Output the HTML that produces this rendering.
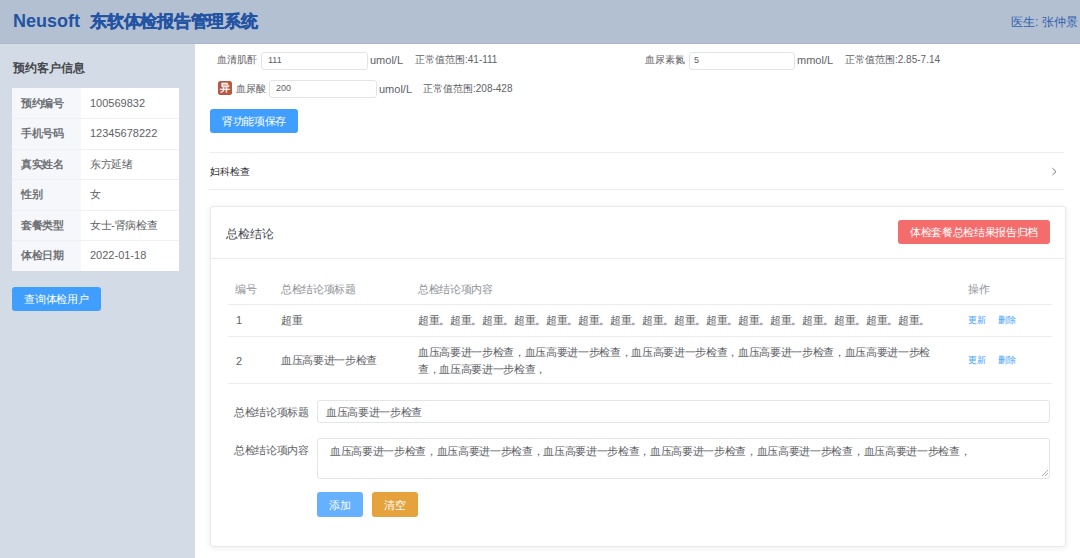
<!DOCTYPE html>
<html><head><meta charset="utf-8">
<style>
*{box-sizing:border-box;margin:0;padding:0}
html,body{width:1080px;height:558px;overflow:hidden;background:#fff;font-family:"Liberation Sans",sans-serif;color:#606266}
.a{position:absolute;white-space:nowrap;line-height:1}
#hdr{position:absolute;left:0;top:0;width:1080px;height:44px;background:#b3c0d1}
#side{position:absolute;left:0;top:44px;width:195px;height:514px;background:#d3dce6}
.inp{position:absolute;border:1px solid #e2e4e8;border-radius:3px;background:#fff}
.btn{position:absolute;border-radius:3px;color:#fff;text-align:center}
.line{position:absolute;height:1px;background:#ededed}
.th{color:#909399}
.t105{font-size:10.5px;letter-spacing:-0.33px}
.t10{font-size:10px}
.t9{font-size:9px}
.lbl{font-size:10.5px;letter-spacing:-0.33px;color:#6e7075;font-weight:600}
.val{font-size:10.5px;letter-spacing:-0.33px;color:#606266}
.row{position:absolute;left:12px;width:167px;height:1px;background:#eef0f3}
.num{font-size:11px;letter-spacing:0}
.lnk{font-size:9px;color:#409eff}
</style></head><body>
<div id="hdr"></div><div style="position:absolute;left:0;top:43px;width:1080px;height:1px;background:#adb9c9"></div>
<div class="a" style="left:13px;top:12px;font-size:18px;font-weight:bold;color:#2353a3">Neusoft</div>
<div class="a" style="left:90px;top:14px;font-size:16.8px;letter-spacing:-0.25px;font-weight:bold;color:#2353a3;-webkit-text-stroke:0.35px #2353a3">东软体检报告管理系统</div>
<div class="a" style="left:1011px;top:16px;font-size:12px;color:#3160ae">医生: 张仲景</div>

<div id="side"></div>
<div class="a" style="left:13px;top:62px;font-size:12px;font-weight:600;color:#45474c">预约客户信息</div>
<div style="position:absolute;left:12px;top:88px;width:167px;height:183px;background:#fff"></div>
<div style="position:absolute;left:12px;top:88px;width:69px;height:183px;background:#f5f7fa"></div>
<div class="row" style="top:118px"></div>
<div class="row" style="top:149px"></div>
<div class="row" style="top:179px"></div>
<div class="row" style="top:210px"></div>
<div class="row" style="top:240px"></div>
<div class="a lbl" style="left:21px;top:98px">预约编号</div><div class="a val num" style="left:90px;top:98px">100569832</div>
<div class="a lbl" style="left:21px;top:128px">手机号码</div><div class="a val num" style="left:90px;top:128px">12345678222</div>
<div class="a lbl" style="left:21px;top:159px">真实姓名</div><div class="a val" style="left:90px;top:159px">东方延绪</div>
<div class="a lbl" style="left:21px;top:189px">性别</div><div class="a val" style="left:90px;top:189px">女</div>
<div class="a lbl" style="left:21px;top:220px">套餐类型</div><div class="a val" style="left:90px;top:220px">女士-肾病检查</div>
<div class="a lbl" style="left:21px;top:250px">体检日期</div><div class="a val num" style="left:90px;top:250px">2022-01-18</div>
<div class="btn" style="left:12px;top:287px;width:89px;height:24px;background:#409eff"><span class="a t105" style="left:0;right:0;top:7px">查询体检用户</span></div>

<!-- main -->
<div class="a t10" style="left:217px;top:55px">血清肌酐</div>
<div class="inp" style="left:261px;top:52px;width:107px;height:18px"></div>
<div class="a t9" style="left:268px;top:56px;color:#606266">111</div>
<div class="a" style="left:370px;top:55px;font-size:11px">umol/L</div>
<div class="a t10" style="left:415px;top:55px">正常值范围:41-111</div>

<div class="a t10" style="left:645px;top:55px">血尿素氮</div>
<div class="inp" style="left:689px;top:52px;width:106px;height:18px"></div>
<div class="a t9" style="left:694px;top:56px;color:#606266">5</div>
<div class="a" style="left:797px;top:55px;font-size:11px">mmol/L</div>
<div class="a t10" style="left:845px;top:55px">正常值范围:2.85-7.14</div>

<div style="position:absolute;left:218px;top:80.5px;width:14px;height:14px;background:#b9563f;border-radius:2.5px"></div>
<div class="a t10" style="left:220px;top:82.5px;color:#fff;font-weight:600">异</div>
<div class="a t10" style="left:236px;top:84px">血尿酸</div>
<div class="inp" style="left:269px;top:80px;width:108px;height:18px"></div>
<div class="a t9" style="left:276px;top:84px;color:#606266">200</div>
<div class="a" style="left:379px;top:84px;font-size:11px">umol/L</div>
<div class="a t10" style="left:423px;top:84px">正常值范围:208-428</div>

<div class="btn" style="left:210px;top:109px;width:88px;height:24px;background:#409eff"><span class="a t105" style="left:0;right:0;top:7px">肾功能项保存</span></div>

<div class="line" style="left:209px;top:152px;width:855px"></div>
<div class="a t10" style="left:210px;top:167px;color:#303133">妇科检查</div>
<svg style="position:absolute;left:1051px;top:167px" width="7" height="10"><path d="M1.5 1.2 L5 4.6 L1.5 8" fill="none" stroke="#707070" stroke-width="1"/></svg>
<div class="line" style="left:209px;top:189px;width:855px"></div>

<!-- card -->
<div style="position:absolute;left:210px;top:206px;width:856px;height:341px;border:1px solid #e9e9eb;border-radius:3px;background:#fff;box-shadow:0 1px 6px rgba(0,0,0,0.08)"></div>
<div class="a" style="left:226px;top:228px;font-size:12px;color:#45474c">总检结论</div>
<div class="btn" style="left:898px;top:220px;width:152px;height:24px;background:#f56c6c"><span class="a t105" style="left:0;right:0;top:7px">体检套餐总检结果报告归档</span></div>
<div class="line" style="left:211px;top:258px;width:854px"></div>

<div class="a t105 th" style="left:235px;top:284px">编号</div>
<div class="a t105 th" style="left:281px;top:284px">总检结论项标题</div>
<div class="a t105 th" style="left:418px;top:284px">总检结论项内容</div>
<div class="a t105 th" style="left:968px;top:284px">操作</div>
<div class="line" style="left:228px;top:304px;width:824px"></div>

<div class="a" style="left:236px;top:315px;font-size:11px">1</div>
<div class="a t105" style="left:281px;top:315px">超重</div>
<div class="a t105" style="left:418px;top:315px">超重。超重。超重。超重。超重。超重。超重。超重。超重。超重。超重。超重。超重。超重。超重。超重。</div>
<div class="a lnk" style="left:968px;top:316px">更新</div>
<div class="a lnk" style="left:998px;top:316px">删除</div>
<div class="line" style="left:228px;top:336px;width:824px"></div>

<div class="a" style="left:236px;top:356px;font-size:11px">2</div>
<div class="a t105" style="left:281px;top:355px">血压高要进一步检查</div>
<div class="a t105" style="left:418px;top:347px">血压高要进一步检查，血压高要进一步检查，血压高要进一步检查，血压高要进一步检查，血压高要进一步检</div>
<div class="a t105" style="left:418px;top:364px">查，血压高要进一步检查，</div>
<div class="a lnk" style="left:968px;top:356px">更新</div>
<div class="a lnk" style="left:998px;top:356px">删除</div>
<div class="line" style="left:228px;top:383px;width:824px"></div>

<div class="a t105" style="left:234px;top:407px">总检结论项标题</div>
<div class="inp" style="left:317px;top:400px;width:733px;height:23px"></div>
<div class="a t105" style="left:326px;top:407px">血压高要进一步检查</div>
<div class="a t105" style="left:234px;top:445px">总检结论项内容</div>
<div class="inp" style="left:317px;top:438px;width:733px;height:41px"></div>
<div class="a t105" style="left:330px;top:446px">血压高要进一步检查，血压高要进一步检查，血压高要进一步检查，血压高要进一步检查，血压高要进一步检查，血压高要进一步检查，</div>
<svg style="position:absolute;left:1041px;top:469px" width="8" height="8"><path d="M7 1 L1 7 M7 4 L4 7" stroke="#909399" stroke-width="0.8"/></svg>

<div class="btn" style="left:317px;top:492px;width:46px;height:25px;background:#66b1ff"><span class="a t105" style="left:0;right:0;top:8px">添加</span></div>
<div class="btn" style="left:372px;top:492px;width:46px;height:25px;background:#e6a23c"><span class="a t105" style="left:0;right:0;top:8px">清空</span></div>
</body></html>
